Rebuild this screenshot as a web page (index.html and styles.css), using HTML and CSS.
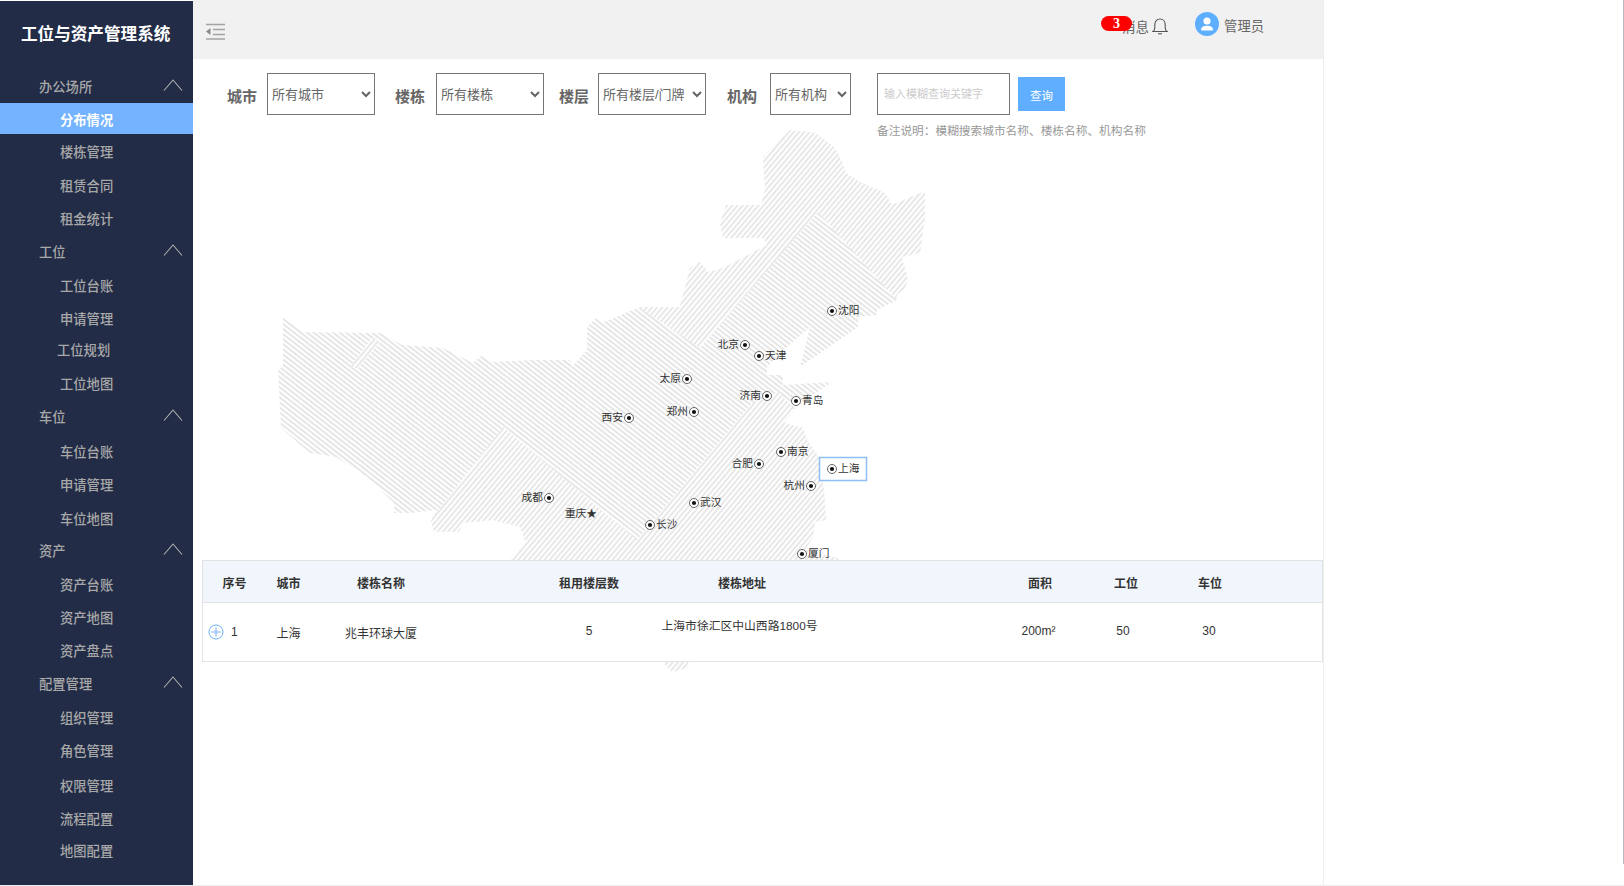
FILE: index.html
```html
<!DOCTYPE html>
<html lang="zh-CN">
<head>
<meta charset="utf-8">
<title>工位与资产管理系统</title>
<link rel="stylesheet" href="styles.css">
</head>
<body>
<div class="app">
  <aside class="sidebar">
    <h1 class="brand">工位与资产管理系统</h1>
    <nav class="nav">
      <div class="row group">办公场所<svg class="chev" viewBox="0 0 20 12"><path d="M1 11.5 10 1l9 10.5"/></svg></div>
      <a class="row item active">分布情况</a>
      <a class="row item">楼栋管理</a>
      <a class="row item p-1">租赁合同</a>
      <a class="row item">租金统计</a>
      <div class="row group">工位<svg class="chev" viewBox="0 0 20 12"><path d="M1 11.5 10 1l9 10.5"/></svg></div>
      <a class="row item p-1">工位台账</a>
      <a class="row item">申请管理</a>
      <a class="row item m-2 outdent">工位规划</a>
      <a class="row item p-1">工位地图</a>
      <div class="row group">车位<svg class="chev" viewBox="0 0 20 12"><path d="M1 11.5 10 1l9 10.5"/></svg></div>
      <a class="row item p-2">车位台账</a>
      <a class="row item">申请管理</a>
      <a class="row item p-1">车位地图</a>
      <div class="row group m-1">资产<svg class="chev" viewBox="0 0 20 12"><path d="M1 11.5 10 1l9 10.5"/></svg></div>
      <a class="row item p-1">资产台账</a>
      <a class="row item">资产地图</a>
      <a class="row item">资产盘点</a>
      <div class="row group">配置管理<svg class="chev" viewBox="0 0 20 12"><path d="M1 11.5 10 1l9 10.5"/></svg></div>
      <a class="row item p-1">组织管理</a>
      <a class="row item">角色管理</a>
      <a class="row item p-2">权限管理</a>
      <a class="row item">流程配置</a>
      <a class="row item m-1">地图配置</a>
    </nav>
  </aside>

  <main class="main">
    <header class="topbar">
      <svg class="collapse" viewBox="0 0 20 16">
        <path class="collapse-lines" d="M1 1h19M8 6h12M8 11h12M1 15.500h19"/>
        <path class="collapse-arrow" d="M5.500 4.500v7L1 8z"/>
      </svg>
      <div class="top-right">
        <div class="messages">
          <span class="msg-text">消息</span>
          <span class="badge">3</span>
          <svg class="bell" viewBox="0 0 16 17">
            <path d="M1 13.500c1.300-1 1.800-2 1.800-4V6.500C2.800 3.300 5 1 8 1s5.200 2.300 5.200 5.500v3c0 2 .5 3 1.800 4z"/>
            <path d="M6 15.800h4"/>
          </svg>
        </div>
        <div class="user">
          <svg class="avatar" viewBox="0 0 24 24">
            <circle class="avatar-bg" cx="12" cy="12" r="12"/>
            <circle class="avatar-fg" cx="12" cy="9" r="3.600"/>
            <path class="avatar-fg" d="M6 17.500c0-2.500 2.500-3.800 6-3.800s6 1.300 6 3.800c0 .8-.5 1-1.200 1H7.200c-.7 0-1.200-.2-1.200-1z"/>
          </svg>
          <span class="user-name">管理员</span>
        </div>
      </div>
    </header>

    <section class="filters">
      <div class="field field-city">
        <label class="field-label">城市</label>
        <select class="picker picker-wide"><option>所有城市</option></select>
      </div>
      <div class="field field-building">
        <label class="field-label">楼栋</label>
        <select class="picker picker-wide"><option>所有楼栋</option></select>
      </div>
      <div class="field field-floor">
        <label class="field-label">楼层</label>
        <select class="picker picker-wide"><option>所有楼层/门牌</option></select>
      </div>
      <div class="field field-org">
        <label class="field-label">机构</label>
        <select class="picker picker-narrow"><option>所有机构</option></select>
      </div>
      <div class="search">
        <div class="search-line">
          <input class="search-input" type="text" placeholder="输入模糊查询关键字">
          <button class="search-btn" type="button">查询</button>
        </div>
        <p class="search-note">备注说明：模糊搜索城市名称、楼栋名称、机构名称</p>
      </div>
    </section>

    <section class="map-area">
      <svg class="map" viewBox="193 100 1130 600" width="1130" height="600">
        <defs>
          <pattern id="hatch-back" width="4" height="4" patternUnits="userSpaceOnUse" patternTransform="rotate(38)">
            <rect width="4" height="2" fill="#e6e6e6"/>
          </pattern>
          <pattern id="hatch-fore" width="4" height="4" patternUnits="userSpaceOnUse" patternTransform="rotate(-50)">
            <rect width="4" height="2" fill="#e8e8e8"/>
          </pattern>
          <clipPath id="china">
            <polygon points="790,130 816,133 834,147 840,157 846,173 862,183 885,193 892,205 925,191 925,217 920,253 902,257 908,280 905,288 897,295 897,300 877,310 877,315 858,317 858,327 800,367 810,327 787,347 767,367 767,375 783,375 783,385 832,382 796,407 784,423 803,428 807,440 819,457 824,490 826,520 815,522 813,537 805,550 838,558 838,580 509,580 509,560 526,543 520,527 493,520 463,523 459,532 434,532 431,520 437,510 411,513 394,513 394,503 367,477 336,457 310,453 281,428 278,369 283,367 283,317 303,332 370,333 380,333 402,345 443,348 473,363 482,355 493,362 532,360 570,360 572,367 587,350 587,327 597,317 604,322 640,307 680,307 690,268 700,262 708,272 723,268 767,245 763,238 723,238 720,223 726,205 761,205 765,190 763,157"/>
            <polygon points="660,640 694,640 687,668 672,672 665,665"/>
          </clipPath>
        </defs>
        <g clip-path="url(#china)">
          <rect x="250" y="110" width="700" height="570" fill="url(#hatch-back)"/>
          <polygon fill="#fff" points="600,100 950,100 950,320 897,300 818,212 700,348 640,308 600,300"/>
          <polygon fill="url(#hatch-fore)" points="600,100 950,100 950,320 897,300 818,212 700,348 640,308 600,300"/>
          <polygon fill="#fff" points="503,427 637,540 752,403 778,392 800,415 900,415 900,690 400,690 400,560 431,520"/>
          <polygon fill="url(#hatch-fore)" points="503,427 637,540 752,403 778,392 800,415 900,415 900,690 400,690 400,560 431,520"/>
          <polygon fill="#fff" points="350,367 372,338 380,342 358,368"/>
          <polygon fill="url(#hatch-fore)" points="350,367 372,338 380,342 358,368"/>
        </g>

        <rect class="city-box" x="819.500" y="457.500" width="47" height="23"/>

        <g class="pin"><circle class="ring" cx="832" cy="311" r="4.500"/><circle class="dot" cx="832" cy="311" r="2.100"/><text x="838" y="314">沈阳</text></g>
        <g class="pin"><circle class="ring" cx="745" cy="345" r="4.500"/><circle class="dot" cx="745" cy="345" r="2.100"/><text class="left" x="739" y="348">北京</text></g>
        <g class="pin"><circle class="ring" cx="759" cy="356" r="4.500"/><circle class="dot" cx="759" cy="356" r="2.100"/><text x="765" y="359">天津</text></g>
        <g class="pin"><circle class="ring" cx="687" cy="379" r="4.500"/><circle class="dot" cx="687" cy="379" r="2.100"/><text class="left" x="681" y="382">太原</text></g>
        <g class="pin"><circle class="ring" cx="767" cy="396" r="4.500"/><circle class="dot" cx="767" cy="396" r="2.100"/><text class="left" x="761" y="399">济南</text></g>
        <g class="pin"><circle class="ring" cx="796" cy="401" r="4.500"/><circle class="dot" cx="796" cy="401" r="2.100"/><text x="802" y="404">青岛</text></g>
        <g class="pin"><circle class="ring" cx="629" cy="418" r="4.500"/><circle class="dot" cx="629" cy="418" r="2.100"/><text class="left" x="623" y="421">西安</text></g>
        <g class="pin"><circle class="ring" cx="694" cy="412" r="4.500"/><circle class="dot" cx="694" cy="412" r="2.100"/><text class="left" x="688" y="415">郑州</text></g>
        <g class="pin"><circle class="ring" cx="781" cy="452" r="4.500"/><circle class="dot" cx="781" cy="452" r="2.100"/><text x="787" y="455">南京</text></g>
        <g class="pin"><circle class="ring" cx="759" cy="464" r="4.500"/><circle class="dot" cx="759" cy="464" r="2.100"/><text class="left" x="753" y="467">合肥</text></g>
        <g class="pin"><circle class="ring" cx="832" cy="469" r="4.500"/><circle class="dot" cx="832" cy="469" r="2.100"/><text x="838" y="472">上海</text></g>
        <g class="pin"><circle class="ring" cx="811" cy="486" r="4.500"/><circle class="dot" cx="811" cy="486" r="2.100"/><text class="left" x="805" y="489">杭州</text></g>
        <g class="pin"><circle class="ring" cx="549" cy="498" r="4.500"/><circle class="dot" cx="549" cy="498" r="2.100"/><text class="left" x="543" y="501">成都</text></g>
        <g class="pin"><text class="left" x="597" y="517">重庆★</text></g>
        <g class="pin"><circle class="ring" cx="694" cy="503" r="4.500"/><circle class="dot" cx="694" cy="503" r="2.100"/><text x="700" y="506">武汉</text></g>
        <g class="pin"><circle class="ring" cx="650" cy="525" r="4.500"/><circle class="dot" cx="650" cy="525" r="2.100"/><text x="656" y="528">长沙</text></g>
        <g class="pin"><circle class="ring" cx="802" cy="554" r="4.500"/><circle class="dot" cx="802" cy="554" r="2.100"/><text x="808" y="557">厦门</text></g>
      </svg>
    </section>

    <section class="table">
      <div class="thead">
        <div class="cell head-index">序号</div>
        <div class="cell">城市</div>
        <div class="cell">楼栋名称</div>
        <div class="cell col-floors">租用楼层数</div>
        <div class="cell">楼栋地址</div>
        <div class="cell col-area">面积</div>
        <div class="cell">工位</div>
        <div class="cell">车位</div>
      </div>
      <div class="tbody">
        <div class="cell cell-index">
          <svg class="expand" viewBox="0 0 16 16"><circle cx="8" cy="8" r="7"/><path d="M8 3.500v9M3.500 8h9"/></svg>
          <span>1</span>
        </div>
        <div class="cell low">上海</div>
        <div class="cell low">兆丰环球大厦</div>
        <div class="cell col-floors">5</div>
        <div class="cell high">上海市徐汇区中山西路1800号</div>
        <div class="cell col-area area-value">200m²</div>
        <div class="cell parking-value">50</div>
        <div class="cell car-value">30</div>
      </div>
    </section>
  </main>
  <div class="blank"></div>
  <div class="scroll-thumb"></div>
</div>
</body>
</html>
```
FILE: styles.css
```css
* { box-sizing: border-box; }

html, body {
  margin: 0;
  height: 100%;
  overflow: hidden;
  background: #fff;
}

body {
  font-family: "Liberation Sans", "Noto Sans CJK SC", sans-serif;
  font-size: 12px;
  color: #333;
}

.app {
  position: relative;
  display: flex;
  height: 886px;
  border-bottom: 1px solid #eee;
}

/* sidebar */
.sidebar {
  width: 193px;
  flex: none;
  margin-top: 1px;
  background: #222c47;
}

.brand {
  margin: 0;
  padding: 23px 0 0 21px;
  height: 70px;
  font-size: 16.600px;
  line-height: 21px;
  font-weight: 700;
  color: #fff;
  white-space: nowrap;
}

.row {
  display: flex;
  align-items: center;
  height: 31px;
  margin-top: 2px;
  font-size: 13.300px;
  font-weight: 500;
  color: #a8a8a8;
  white-space: nowrap;
}

.group {
  position: relative;
  padding-left: 39px;
}

.nav .group:first-child { margin-top: 0; }

.item { padding-left: 60px; }
.outdent { padding-left: 57px; }
.m-1 { margin-top: 1px; }
.m-2 { margin-top: 0; }
.p-1 { margin-top: 3px; }
.p-2 { margin-top: 4px; }

.row.active {
  margin-top: 1px;
  background: #74b3ff;
  color: #fff;
  font-weight: 700;
  padding-top: 2px;
}

.chev {
  position: absolute;
  left: 163px;
  top: 8px;
  width: 20px;
  height: 12px;
  fill: none;
  stroke: #b0b0b0;
  stroke-width: 1.100;
}

/* main column */
.main {
  width: 1131px;
  flex: none;
  display: flex;
  flex-direction: column;
  border-right: 1px solid #eee;
}

.topbar {
  flex: none;
  position: relative;
  display: flex;
  align-items: flex-start;
  justify-content: space-between;
  height: 59px;
  background: #f1f1f1;
  padding: 23px 0 0 12px;
}

.collapse {
  width: 20px;
  height: 17px;
}

.collapse-lines {
  fill: none;
  stroke: #a3a3a3;
  stroke-width: 1.500;
}

.collapse-arrow { fill: #8c8c8c; }

.top-right {
  display: flex;
  align-items: center;
  margin-top: -11px;
  padding-right: 59px;
}

.messages {
  position: relative;
  display: flex;
  align-items: center;
  margin-right: 27px;
  margin-top: 4px;
}

.msg-text {
  font-size: 13.500px;
  color: #666;
  margin-right: 3px;
}

.badge {
  position: absolute;
  left: -21px;
  top: 0;
  width: 31px;
  height: 15px;
  border-radius: 8px;
  background: #f00;
  color: #fff;
  font-family: "Liberation Serif", serif;
  font-weight: 700;
  font-size: 14px;
  line-height: 15px;
  text-align: center;
}

.bell {
  width: 16px;
  height: 17px;
  fill: none;
  stroke: #555;
  stroke-width: 1.100;
}

.user {
  display: flex;
  align-items: center;
}

.avatar {
  width: 24px;
  height: 24px;
  margin-right: 5px;
}

.avatar-bg { fill: #5eaeff; }
.avatar-fg { fill: #fff; }

.user-name {
  font-size: 13.300px;
  color: #666;
  margin-top: 3px;
}

/* filters */
.filters {
  flex: none;
  display: flex;
  align-items: flex-start;
  height: 81px;
  padding: 14px 0 0 34px;
}

.field {
  display: flex;
  align-items: center;
  flex: none;
}

.field-label {
  width: 30px;
  font-size: 15px;
  font-weight: 700;
  color: #666;
  padding-top: 2px;
  white-space: nowrap;
}

.field-city { margin-right: 20px; }
.field-building { margin-right: 15px; }
.field-floor { margin-right: 21px; }
.field-org { margin-right: 26px; }

.field-city .field-label { margin-right: 10px; }
.field-building .field-label { margin-right: 11px; }
.field-floor .field-label { margin-right: 9px; }
.field-org .field-label { margin-right: 13px; }

.picker {
  height: 42px;
  padding: 0;
  background: #fff;
  border: 1px solid #767676;
  border-radius: 0;
  font-family: inherit;
  font-size: 13px;
  color: #666;
}

.picker-wide { width: 108px; }
.picker-narrow { width: 81px; }

.search-line {
  display: flex;
  align-items: center;
}

.search-input {
  width: 133px;
  height: 42px;
  padding: 0 6px;
  border: 1px solid #767676;
  border-radius: 0;
  outline: none;
  font-family: inherit;
  font-size: 11px;
}

.search-input::placeholder { color: #ccc; }

.search-btn {
  width: 47px;
  height: 34px;
  margin-left: 8px;
  padding: 2px 0 0;
  border: none;
  background: #5faeff;
  color: #fff;
  font-family: inherit;
  font-size: 11.500px;
}

.search-note {
  margin: 8px 0 0;
  font-size: 11.700px;
  line-height: 16px;
  color: #999;
  white-space: nowrap;
}

/* map */
.map-area {
  flex: none;
  position: relative;
  height: 420px;
}

.map {
  position: absolute;
  left: 0;
  top: -40px;
}

.city-box {
  fill: #fff;
  stroke: #8fbdf5;
  stroke-width: 1.500;
}

.ring {
  fill: #fff;
  stroke: #666;
  stroke-width: 1;
}

.dot { fill: #111; }

.pin text {
  font-size: 10.700px;
  fill: #333;
}

.pin text.left { text-anchor: end; }

/* table */
.table {
  flex: none;
  position: relative;
  margin-left: 9px;
  background: #fff;
  border: 1px solid #e3e3e3;
  height: 102px;
}

.thead, .tbody {
  display: grid;
  grid-template-columns: 65px 41px 144px 197px 184px 249px 86px 82px 1fr;
  align-items: center;
}

.thead {
  height: 42px;
  padding-top: 2px;
  background: #f1f6fd;
  border-bottom: 1px solid #e3e3e3;
  font-weight: 700;
  color: #333;
}

.tbody {
  height: 58px;
  padding-bottom: 3px;
  color: #333;
}

.cell {
  text-align: center;
  white-space: nowrap;
}

.head-index { padding-right: 2px; }
.col-floors { padding-left: 75px; }
.col-area { padding-left: 163px; }
.area-value { padding-left: 160px; }
.parking-value { padding-right: 6px; }
.car-value { padding-right: 2px; }

.cell-index {
  display: flex;
  align-items: center;
  padding-left: 5px;
  gap: 7px;
  padding-top: 2px;
}

.low { padding-top: 4px; }

.high {
  padding-bottom: 13px;
  padding-right: 5px;
  font-size: 11.800px;
}

.expand {
  width: 16px;
  height: 16px;
  fill: none;
  stroke: #6cb0f5;
  stroke-width: 1;
}

.blank { flex: 1; }

.scroll-thumb {
  position: absolute;
  right: 0;
  top: 0;
  width: 1px;
  height: 864px;
  background: #b8b8c0;
}
```
